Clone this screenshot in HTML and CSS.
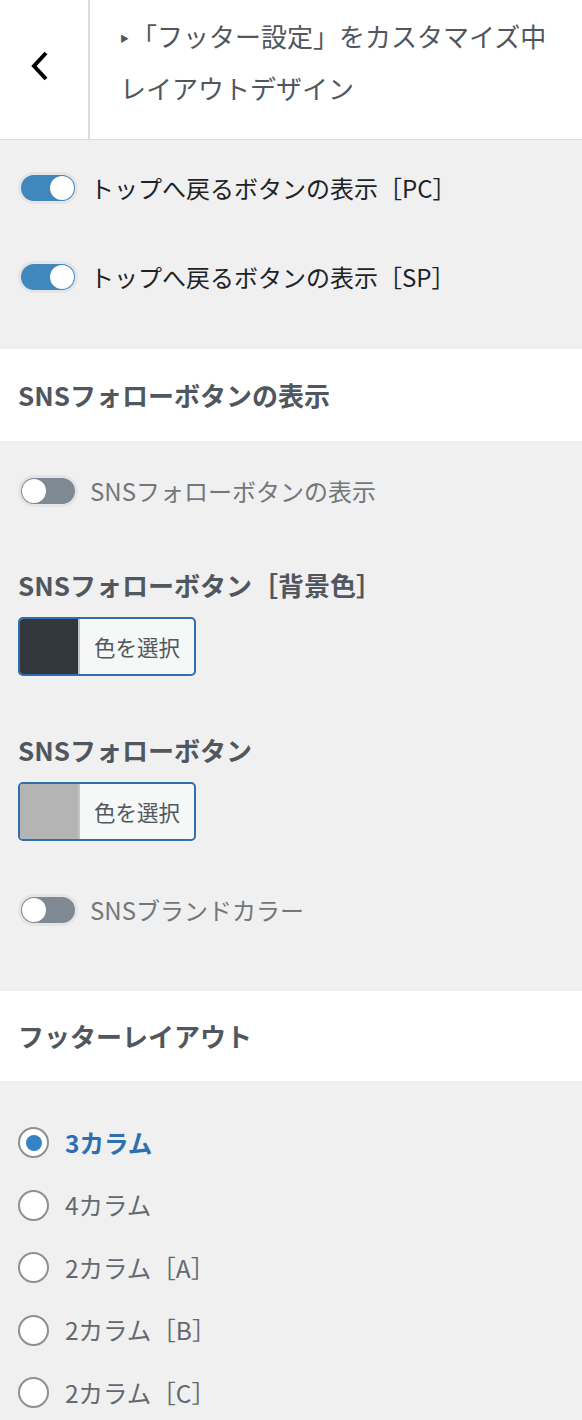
FILE: index.html
```html
<!DOCTYPE html>
<html lang="ja">
<head>
<meta charset="utf-8">
<title>フッター設定</title>
<link rel="stylesheet" href="styles.css">
</head>
<body>
<div class="header">
  <div class="back">
    <svg width="20" height="32" viewBox="0 0 20 32"><polyline points="16,3 4,16 16,29" fill="none" stroke="#000" stroke-width="4" stroke-linejoin="miter"/></svg>
  </div>
  <div class="title">
    <div class="line"><span class="tri">▶</span>「フッター設定」をカスタマイズ中</div>
    <div class="line">レイアウトデザイン</div>
  </div>
</div>

<div class="panel panel-top">
  <div class="toggle-row">
    <span class="toggle on"><span class="knob"></span></span>
    <span class="tlabel">トップへ戻るボタンの表示［PC］</span>
  </div>
  <div class="toggle-row row2">
    <span class="toggle on"><span class="knob"></span></span>
    <span class="tlabel">トップへ戻るボタンの表示［SP］</span>
  </div>
</div>

<div class="section">
  <h3 class="heading">SNSフォローボタンの表示</h3>
</div>

<div class="panel panel-sns">
  <div class="toggle-row">
    <span class="toggle"><span class="knob"></span></span>
    <span class="tlabel off">SNSフォローボタンの表示</span>
  </div>
  <h4 class="heading h-first">SNSフォローボタン［背景色］</h4>
  <button class="color-btn"><span class="swatch dark"></span><span class="ctext">色を選択</span></button>
  <h4 class="heading h-next">SNSフォローボタン</h4>
  <button class="color-btn"><span class="swatch light"></span><span class="ctext">色を選択</span></button>
  <div class="toggle-row row-brand">
    <span class="toggle"><span class="knob"></span></span>
    <span class="tlabel off">SNSブランドカラー</span>
  </div>
</div>

<div class="section section2">
  <h3 class="heading">フッターレイアウト</h3>
</div>

<div class="panel panel-radio">
  <div class="radio-row"><span class="radio checked"></span><span class="rlabel sel">3カラム</span></div>
  <div class="radio-row"><span class="radio"></span><span class="rlabel">4カラム</span></div>
  <div class="radio-row"><span class="radio"></span><span class="rlabel">2カラム［A］</span></div>
  <div class="radio-row"><span class="radio"></span><span class="rlabel">2カラム［B］</span></div>
  <div class="radio-row"><span class="radio"></span><span class="rlabel">2カラム［C］</span></div>
</div>
</body>
</html>
```

FILE: styles.css
```css
* { box-sizing: border-box; }
html, body { margin: 0; padding: 0; }
body {
  width: 582px;
  background: #f0f0f1;
  font-family: "Noto Sans CJK JP", "Noto Sans", sans-serif;
  color: #1d2327;
}
.header {
  display: flex;
  height: 140px;
  background: #fff;
  border-bottom: 1px solid #dcdcde;
}
.back {
  width: 90px;
  flex: none;
  border-right: 2px solid #dcdcde;
  display: flex;
  align-items: center;
  justify-content: center;
  padding-right: 8px;
  padding-bottom: 8px;
}
.back svg { display: block; }
.title {
  padding: 10px 0 0 30px;
  color: #50575e;
  font-size: 26px;
  line-height: 52px;
}
.line { white-space: nowrap; height: 52px; }
.tri { font-size: 9px; line-height: 0; vertical-align: 5px; margin-right: 2px; }

.panel { padding: 0 18px; }
.panel-top { padding-top: 35px; padding-bottom: 59px; }
.toggle-row {
  display: flex;
  align-items: center;
  height: 26px;
}
.row2 { margin-top: 63px; }
.toggle {
  position: relative;
  width: 54px;
  height: 26px;
  margin-left: 3px;
  border-radius: 13px;
  background: #7e8993;
  box-shadow: 0 0 0 3px #e4e4e6;
  flex: none;
}
.toggle.on { background: #3f87bd; }
.knob {
  position: absolute;
  top: 1px;
  left: 1px;
  width: 24px;
  height: 24px;
  border-radius: 50%;
  background: #fff;
}
.toggle.on .knob { left: 29px; }
.tlabel {
  margin-left: 15px;
  font-size: 24px;
  line-height: 32px;
  color: #1d2327;
  white-space: nowrap;
}
.tlabel.off { color: #72777c; }

.section {
  background: #fff;
  padding: 30px 18px;
  height: 92px;
}
.section2 { height: 90px; padding-top: 29px; }
.heading {
  margin: 0;
  font-size: 26px;
  line-height: 32px;
  font-weight: bold;
  color: #50575e;
  white-space: nowrap;
}
.panel-sns { padding-top: 37px; padding-bottom: 68px; }
.h-first { margin-top: 65px; }
.h-next { margin-top: 58px; }
.color-btn {
  display: flex;
  margin-top: 16px;
  width: 178px;
  height: 59px;
  padding: 0;
  border: 2px solid #2f6fb0;
  border-radius: 5px;
  overflow: hidden;
  background: #f6f7f7;
  font-family: inherit;
}
.swatch {
  width: 60px;
  height: 100%;
  border-right: 2px solid #c3c4c7;
  flex: none;
}
.swatch.dark { background: #32373c; }
.swatch.light { background: #b4b4b4; }
.ctext {
  flex: 1;
  align-self: center;
  text-align: center;
  font-size: 21.5px;
  color: #50575e;
  line-height: 32px;
}
.row-brand { margin-top: 56px; }

.panel-radio { padding-top: 46px; }
.radio-row {
  display: flex;
  align-items: center;
  height: 31px;
  margin-bottom: 31.5px;
}
.radio {
  width: 31px;
  height: 31px;
  border: 2px solid #8c8f94;
  border-radius: 50%;
  background: #fff;
  flex: none;
  display: flex;
  align-items: center;
  justify-content: center;
}
.radio.checked::after {
  content: "";
  width: 16px;
  height: 16px;
  border-radius: 50%;
  background: #3582c4;
}
.rlabel {
  margin-left: 16px;
  font-size: 24.5px;
  line-height: 32px;
  color: #646970;
  white-space: nowrap;
}
.rlabel.sel { color: #2f6fb0; font-weight: bold; }
```
